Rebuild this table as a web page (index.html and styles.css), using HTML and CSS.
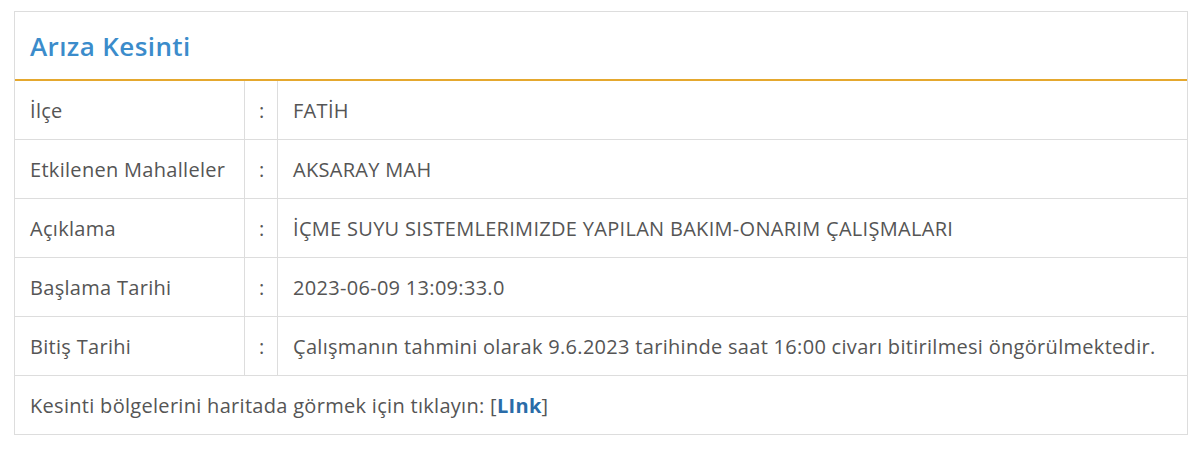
FILE: index.html
```html
<!DOCTYPE html>
<html lang="tr">
<head>
    <meta charset="UTF-8">
    <title>Arıza Kesinti</title>
    <link rel="stylesheet" href="styles.css">
</head>
<body>
    <div class="panel">
        <div class="panel-heading">
            <h3>Arıza Kesinti</h3>
        </div>
        <table class="info">
            <tr>
                <td class="label">İlçe</td>
                <td class="sep">:</td>
                <td>FATİH</td>
            </tr>
            <tr>
                <td class="label">Etkilenen Mahalleler</td>
                <td class="sep">:</td>
                <td>AKSARAY MAH</td>
            </tr>
            <tr>
                <td class="label">Açıklama</td>
                <td class="sep">:</td>
                <td>İÇME SUYU SISTEMLERIMIZDE YAPILAN BAKIM-ONARIM ÇALIŞMALARI</td>
            </tr>
            <tr>
                <td class="label">Başlama Tarihi</td>
                <td class="sep">:</td>
                <td>2023-06-09 13:09:33.0</td>
            </tr>
            <tr>
                <td class="label">Bitiş Tarihi</td>
                <td class="sep">:</td>
                <td>Çalışmanın tahmini olarak 9.6.2023 tarihinde saat 16:00 civarı bitirilmesi öngörülmektedir.</td>
            </tr>
            <tr>
                <td colspan="3">Kesinti bölgelerini haritada görmek için tıklayın: [<a href="#">LInk</a>]</td>
            </tr>
        </table>
    </div>
</body>
</html>
```

FILE: styles.css
```css
body {
    margin: 0;
    padding: 11px 12px 0 14px;
    font-family: "Open Sans", sans-serif;
    color: #555;
    background: #fff;
}
.panel {
    border: 1px solid #ddd;
    width: 1172px;
}
.panel-heading {
    height: 67px;
    border-bottom: 2px solid #e5a82e;
    display: flex;
    align-items: center;
    padding-left: 15px;
}
.panel-heading h3 {
    margin: 0;
    font-size: 26px;
    font-weight: 600;
    letter-spacing: 0.4px;
    color: #3b8ccb;
}
.info {
    width: 100%;
    border-collapse: collapse;
    font-size: 20px;
    letter-spacing: 0.3px;
}
.info td {
    height: 58px;
    padding: 0 0 0 15px;
    border-top: 1px solid #ddd;
    border-left: 1px solid #ddd;
    white-space: nowrap;
}
.info tr:first-child td {
    border-top: none;
}
.info td:first-child {
    border-left: none;
}
.info .label {
    width: 214px;
}
.info .sep {
    width: 18px;
    padding-left: 14px;
}
.info a {
    color: #2a6ca8;
    font-weight: 700;
    text-decoration: none;
}
```
